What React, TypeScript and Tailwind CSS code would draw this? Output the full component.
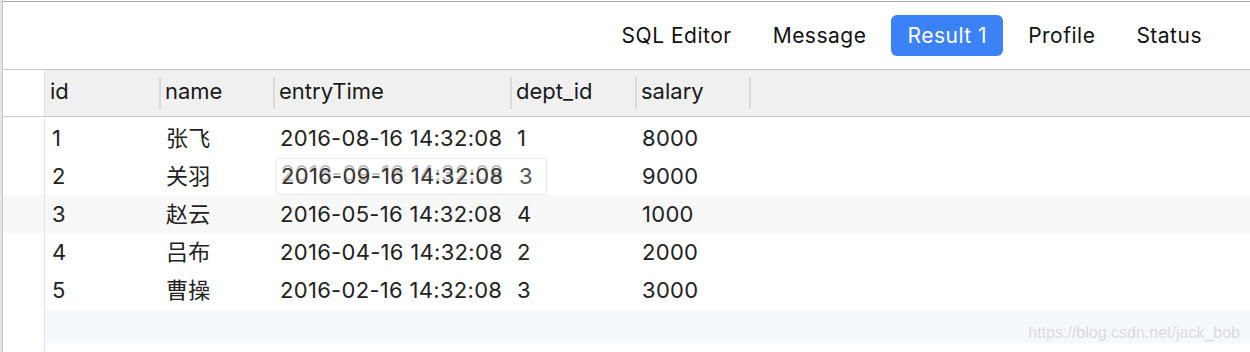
import React from 'react';

const font = { fontFamily: 'Inter, "Noto Sans CJK SC", sans-serif' };

const tabs = ['SQL Editor', 'Message', 'Result 1', 'Profile', 'Status'];

const columns = [
  { key: 'id', width: 'w-[114px]' },
  { key: 'name', width: 'w-[114px]' },
  { key: 'entryTime', width: 'w-[237px]' },
  { key: 'dept_id', width: 'w-[125px]' },
  { key: 'salary', width: 'w-[114px]' },
];

const rows = [
  ['1', '张飞', '2016-08-16 14:32:08', '1', '8000'],
  ['2', '关羽', '2016-09-16 14:32:08', '3', '9000'],
  ['3', '赵云', '2016-05-16 14:32:08', '4', '1000'],
  ['4', '吕布', '2016-04-16 14:32:08', '2', '2000'],
  ['5', '曹操', '2016-02-16 14:32:08', '3', '3000'],
];

function Row({ cells, index }: { cells: string[]; index: number }) {
  const striped = index === 2;
  return (
    <div className={`relative flex h-[38px] items-center ${striped ? 'bg-[#f8f8f8]' : ''}`}>
      <div className="h-full w-[42px] shrink-0 border-r border-[#e2e2e2]" />
      {cells.map((c, i) => (
        <div key={i} className={`${columns[i].width} shrink-0 pl-[7px] text-[22px] tracking-[0.3px] text-[#222]`}>
          {c}
        </div>
      ))}
      {/* drag ghost over the entryTime cell of row 2 */}
      {index === 1 && (
        <div className="absolute left-[273px] top-px flex h-[37px] w-[271px] items-center rounded-[3px] border border-[#ececec] bg-white/95 shadow-[0_1px_3px_rgba(0,0,0,0.06)]">
          <div className="relative w-[237px] pl-[4px] text-[22px] tracking-[0.3px] text-[#333]">
            <span className="absolute left-[4px] top-[-3px] text-[#bdbdbd]">{cells[2]}</span>
            <span className="relative">{cells[2]}</span>
          </div>
          <div className="pl-[5px] text-[22px] text-[#555]">{cells[3]}</div>
        </div>
      )}
    </div>
  );
}

export default function App() {
  return (
    <div className="relative flex h-[352px] w-[1250px] overflow-hidden bg-white" style={font}>
      <div className="h-full w-[3px] shrink-0 border-r border-[#c4c4c4] bg-[#e6e6e6]" />
      <div className="flex min-w-0 flex-1 flex-col">
        <div className="mt-px flex h-[68px] shrink-0 items-center justify-end gap-[9px] border-t border-[#a8a8a8] pr-[32px]">
          {tabs.map(t => (
            <div
              key={t}
              className={`flex h-[41px] items-center rounded-[6px] px-4 text-[21px] tracking-[0.5px] ${
                t === 'Result 1' ? 'bg-[#3b82f6] text-white' : 'text-[#111]'
              }`}
            >
              {t}
            </div>
          ))}
        </div>
        <div className="flex h-[48px] shrink-0 items-center border-y border-[#c8c8c8]">
          <div className="h-full w-[42px] shrink-0 border-r border-[#e2e2e2] bg-white" />
          <div className="flex h-full flex-1 items-center bg-[#f0f0f0]">
            {columns.map((c, i) => (
              <div key={c.key} className={`${c.width} flex h-full shrink-0 items-center`}>
                {i > 0 && <div className="mr-[4px] h-[32px] w-[2px] bg-[#dadada]" />}
                <span className={`${i === 0 ? 'pl-[5px]' : ''} -mt-[3px] text-[22px] text-[#1a1a1a]`}>{c.key}</span>
              </div>
            ))}
            <div className="h-[32px] w-[2px] bg-[#dadada]" />
          </div>
        </div>
        <div className="flex flex-1 flex-col pt-[2px]">
          {rows.map((r, i) => (
            <Row key={i} cells={r} index={i} />
          ))}
          <div className="flex h-[34px]">
            <div className="h-full w-[42px] shrink-0 border-r border-[#e2e2e2]" />
            <div className="flex-1 bg-[#f5f8fd]" />
          </div>
          <div className="flex flex-1">
            <div className="h-full w-[42px] shrink-0 border-r border-[#e2e2e2]" />
          </div>
        </div>
      </div>
      <div
        className="absolute bottom-[7px] right-[10px] text-[16px] text-[#dcdcdc]"
        style={{ fontFamily: '"Liberation Sans", sans-serif' }}
      >
        https://blog.csdn.net/jack_bob
      </div>
    </div>
  );
}
